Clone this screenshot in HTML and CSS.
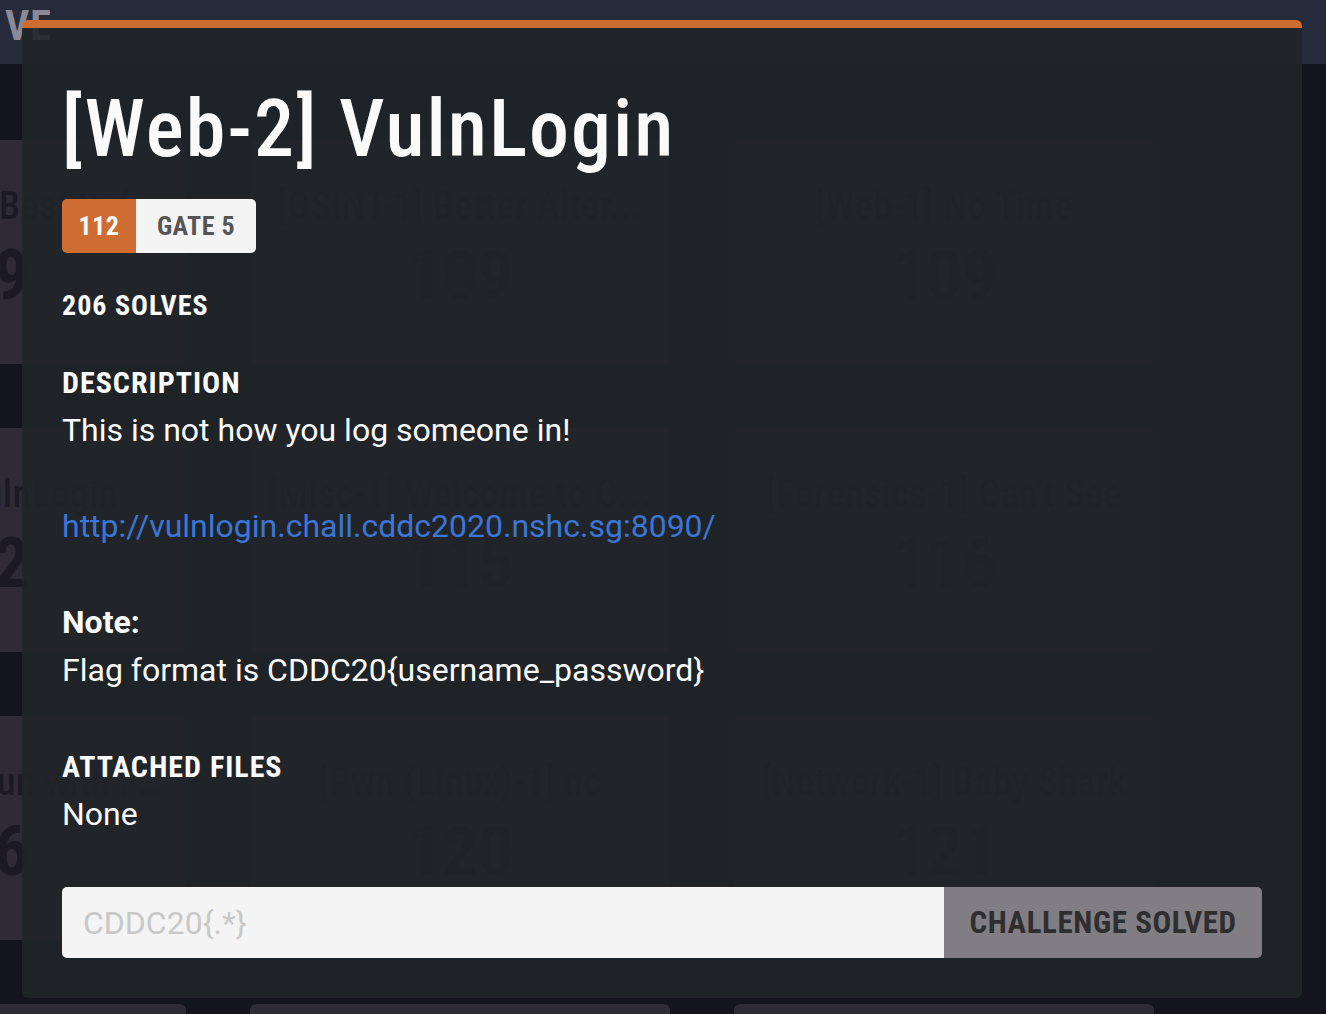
FILE: index.html
```html
<!DOCTYPE html>
<html lang="en">
<head>
<meta charset="utf-8">
<title>[Web-2] VulnLogin</title>
<link rel="stylesheet" href="styles.css">
</head>
<body>
<header class="navbar"><span class="logo">VE</span></header>
<main class="board">
  <div class="card"><div class="card-title">[Reversing-1] Best Before Dates</div><div class="card-pts">109</div></div>
  <div class="card"><div class="card-title">[OSINT-1] Better Alter...</div><div class="card-pts">109</div></div>
  <div class="card"><div class="card-title">[Web-1] No Time</div><div class="card-pts">109</div></div>
  <div class="card"><div class="card-title">[Web-2] VulnLogin</div><div class="card-pts">112</div></div>
  <div class="card"><div class="card-title">[Misc-1] Welcome to C...</div><div class="card-pts">115</div></div>
  <div class="card"><div class="card-title">[Forensics-1] Can't See</div><div class="card-pts">116</div></div>
  <div class="card"><div class="card-title">[Forensic-2] Fun with Files and Folders</div><div class="card-pts">116</div></div>
  <div class="card"><div class="card-title">[Pwn (Linux)-1] nc</div><div class="card-pts">120</div></div>
  <div class="card"><div class="card-title">[Network-1] Baby Shark</div><div class="card-pts">121</div></div>
  <div class="card"><div class="card-title">[Web-3] Cookie Jar</div><div class="card-pts">124</div></div>
  <div class="card"><div class="card-title">[Crypto-1] Base Ten</div><div class="card-pts">125</div></div>
  <div class="card"><div class="card-title">[Misc-4] Next Door</div><div class="card-pts">126</div></div>
</main>
<section class="modal">
  <h1 class="title">[Web-2] VulnLogin</h1>
  <div class="badge"><span class="badge-pts">112</span><span class="badge-gate">GATE 5</span></div>
  <div class="solves">206 SOLVES</div>
  <h2 class="section">DESCRIPTION</h2>
  <div class="desc">
    <p>This is not how you log someone in!</p>
    <p><a class="link" href="#">http://vulnlogin.chall.cddc2020.nshc.sg:8090/</a></p>
    <p><strong class="note">Note:</strong><br>Flag format is CDDC20{username_password}</p>
  </div>
  <h2 class="section">ATTACHED FILES</h2>
  <div class="files">None</div>
  <form class="flag-form">
    <input class="flag-input" type="text" placeholder="CDDC20{.*}">
    <button class="flag-btn" type="button">CHALLENGE SOLVED</button>
  </form>
</section>
</body>
</html>
```
FILE: styles.css
```css
:root {
  --cond: "Roboto Condensed", "Liberation Sans Narrow", "DejaVu Sans Condensed", "DejaVu Sans", sans-serif;
}
* { box-sizing: border-box; }
html, body { margin: 0; height: 100%; }
body {
  background: #13141e;
  font-family: Roboto, "Liberation Sans", sans-serif;
  overflow: hidden;
  position: relative;
}
.navbar {
  height: 64px;
  background: #262b3b;
  display: flex;
  align-items: flex-start;
  padding: 5px 0 0 5px;
}
.logo {
  font-family: var(--cond);
  font-weight: 700;
  font-size: 42px;
  line-height: 42px;
  letter-spacing: 1px;
  color: #8a8a96;
}
.board {
  display: grid;
  grid-template-columns: repeat(3, 420px);
  grid-auto-rows: 224px;
  gap: 64px;
  margin-left: -234px;
  padding-top: 76px;
}
.card {
  background: #2e2b37;
  border-radius: 6px;
  display: flex;
  flex-direction: column;
  align-items: center;
  padding: 45px 18px 0;
  color: #1b1a24;
  min-width: 0;
}
.card-title {
  font-family: var(--cond);
  font-weight: 500;
  font-size: 38px;
  line-height: 42px;
  letter-spacing: 0.5px;
  max-width: 100%;
  white-space: nowrap;
  overflow: hidden;
  text-overflow: ellipsis;
}
.card-pts {
  font-family: var(--cond);
  font-weight: 700;
  font-size: 70px;
  line-height: 80px;
  margin-top: 8px;
}
.modal {
  position: absolute;
  left: 22px;
  top: 20px;
  width: 1280px;
  height: 978px;
  background: rgba(32, 37, 40, 0.9);
  border-top: 8px solid #cf6c32;
  border-radius: 6px;
  padding: 0 40px;
  display: flex;
  flex-direction: column;
  align-items: flex-start;
  color: #fafafa;
}
.title {
  margin: 54px 0 0;
  font-family: var(--cond);
  font-weight: 500;
  font-size: 80px;
  line-height: 94px;
  letter-spacing: 2px;
}
.badge {
  margin-top: 23px;
  display: flex;
  height: 54px;
  border-radius: 5px;
  overflow: hidden;
  font-family: var(--cond);
  font-weight: 700;
  font-size: 26px;
  letter-spacing: 0.5px;
}
.badge-pts {
  width: 74px;
  background: #cf6c32;
  color: #fafafa;
  display: flex;
  align-items: center;
  justify-content: center;
}
.badge-gate {
  width: 120px;
  background: #f4f4f4;
  color: #555;
  display: flex;
  align-items: center;
  justify-content: center;
}
.solves {
  margin-top: 36px;
  font-family: var(--cond);
  font-weight: 700;
  font-size: 28px;
  line-height: 34px;
  letter-spacing: 1px;
}
.section {
  margin: 43px 0 0;
  font-family: var(--cond);
  font-weight: 700;
  font-size: 30px;
  line-height: 34px;
  letter-spacing: 1px;
}
.desc {
  margin-top: 6px;
  font-size: 32px;
  line-height: 48px;
}
.desc p { margin: 0 0 48px; }
.desc p:last-child { margin-bottom: 0; }
.desc + .section { margin-top: 56px; }
.link { color: #3b76d6; text-decoration: none; }
.note { font-weight: 700; }
.files {
  margin-top: 6px;
  font-size: 32px;
  line-height: 48px;
}
.flag-form {
  margin-top: 49px;
  display: flex;
  width: 100%;
  height: 71px;
}
.flag-input {
  flex: 1;
  min-width: 0;
  border: 0;
  margin: 0;
  background: #f4f4f4;
  border-radius: 5px 0 0 5px;
  padding: 0 21px;
  font-family: Roboto, sans-serif;
  font-size: 32px;
  color: #333;
  outline: none;
}
.flag-input::placeholder { color: #c8c8c8; }
.flag-btn {
  width: 318px;
  border: 0;
  margin: 0;
  background: #807e82;
  border-radius: 0 5px 5px 0;
  color: #2e2e30;
  font-family: var(--cond);
  font-weight: 700;
  font-size: 31px;
  letter-spacing: 0.6px;
  padding: 0;
}
```
